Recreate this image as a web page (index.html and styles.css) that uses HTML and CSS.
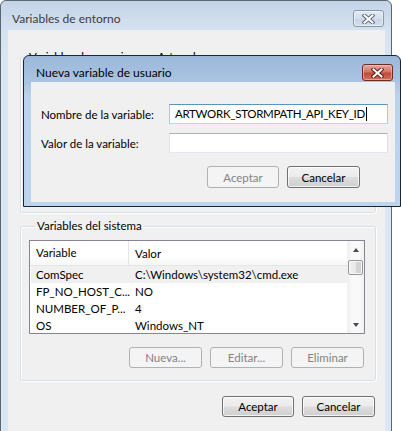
FILE: index.html
```html
<!DOCTYPE html>
<html lang="es">
<head>
<meta charset="utf-8">
<title>Variables de entorno</title>
<link rel="stylesheet" href="styles.css">
</head>
<body>
<div class="window outer">
  <div class="titlebar">
    <span class="title">Variables de entorno</span>
    <span class="close close-inactive">
      <svg width="13" height="10" viewBox="0 0 13 10"><path d="M2.5 1.5 L10.5 8.5 M10.5 1.5 L2.5 8.5" stroke="#5d6b7c" stroke-width="4" stroke-linecap="square" fill="none"/><path d="M2.5 1.5 L10.5 8.5 M10.5 1.5 L2.5 8.5" stroke="#fff" stroke-width="2" stroke-linecap="square" fill="none"/></svg>
    </span>
  </div>
  <div class="client">
    <fieldset class="group group-user">
      <legend>Variables de usuario para Artwork</legend>
      <div class="user-body"></div>
    </fieldset>
    <fieldset class="group group-system">
      <legend>Variables del sistema</legend>
      <div class="listview">
        <div class="list-main">
          <div class="list-header">
            <span class="col1 hcell">Variable</span>
            <span class="col2">Valor</span>
          </div>
          <div class="row selected"><span class="col1">ComSpec</span><span class="col2">C:\Windows\system32\cmd.exe</span></div>
          <div class="row"><span class="col1">FP_NO_HOST_C...</span><span class="col2">NO</span></div>
          <div class="row"><span class="col1">NUMBER_OF_P...</span><span class="col2">4</span></div>
          <div class="row"><span class="col1">OS</span><span class="col2">Windows_NT</span></div>
        </div>
        <div class="scrollbar">
          <span class="sb-btn"><span class="tri tri-up"></span></span>
          <span class="thumb"></span>
          <span class="sb-track"></span>
          <span class="sb-btn"><span class="tri tri-down"></span></span>
        </div>
      </div>
      <div class="btnrow">
        <button class="btn disabled">Nueva...</button>
        <button class="btn disabled">Editar...</button>
        <button class="btn disabled">Eliminar</button>
      </div>
    </fieldset>
    <div class="footer">
      <button class="btn">Aceptar</button>
      <button class="btn">Cancelar</button>
    </div>
  </div>
</div>

<div class="window dialog">
  <div class="titlebar dlg-titlebar">
    <span class="title dlg-title">Nueva variable de usuario</span>
    <span class="close close-active">
      <svg width="13" height="10" viewBox="0 0 13 10"><path d="M2.5 1.5 L10.5 8.5 M10.5 1.5 L2.5 8.5" stroke="#5a2020" stroke-width="4" stroke-linecap="square" fill="none"/><path d="M2.5 1.5 L10.5 8.5 M10.5 1.5 L2.5 8.5" stroke="#fff" stroke-width="2" stroke-linecap="square" fill="none"/></svg>
    </span>
  </div>
  <div class="dlg-client">
    <div class="form-row">
      <span class="form-label">Nombre de la variable:</span>
      <span class="field field-focus">ARTWORK_STORMPATH_API_KEY_ID<span class="caret"></span></span>
    </div>
    <div class="form-row form-row2">
      <span class="form-label">Valor de la variable:</span>
      <span class="field"></span>
    </div>
    <div class="dlg-buttons">
      <button class="btn btn-dlg disabled">Aceptar</button>
      <button class="btn btn-dlg btn-default">Cancelar</button>
    </div>
  </div>
</div>
</body>
</html>
```

FILE: styles.css
```css
html, body {
  margin: 0;
  padding: 0;
  width: 401px;
  height: 431px;
  overflow: hidden;
  background: #ffffff;
}
body {
  position: relative;
  font-family: "Segoe UI", "Lato", "Noto Sans", sans-serif;
  font-size: 11.5px;
  color: #000;
}
.window {
  box-sizing: border-box;
  display: flex;
  flex-direction: column;
}
.outer {
  width: 392px;
  height: 440px;
  border: 1px solid #5d6673;
  border-radius: 6px 6px 0 0;
  background: linear-gradient(#c4d4e7 0px, #d4e1f0 28px, #dae6f3 60px, #dae6f3 100%);
}
.titlebar {
  height: 29px;
  flex: 0 0 auto;
  display: flex;
  align-items: flex-start;
  justify-content: space-between;
  padding: 0 7px 0 11px;
}
.title {
  line-height: 15px;
  margin-top: 10px;
  color: #3c3c3c;
  font-size: 12px;
}
.close {
  box-sizing: border-box;
  width: 31px;
  height: 17px;
  margin-top: 9px;
  border-radius: 3px;
  display: flex;
  align-items: center;
  justify-content: center;
}
.close-inactive {
  border: 1px solid #8797ab;
  background: linear-gradient(#e3eaf3, #d3deea 50%, #c8d5e4 51%, #d2ddea);
  box-shadow: inset 0 0 0 1px rgba(255,255,255,0.5);
}
.close-active {
  border: 1px solid #6e2a26;
  background: linear-gradient(#e6a89e, #d47565 45%, #c24a38 55%, #d2705e);
  box-shadow: inset 0 0 0 1px rgba(255,210,200,0.5);
}
.client {
  flex: 1 1 auto;
  margin: 0 6px 0 7px;
  background: #f0f0f0;
  padding: 20px 0 0 0;
  display: flex;
  flex-direction: column;
  align-items: flex-start;
}
.group {
  box-sizing: border-box;
  margin: 0 0 0 12px;
  width: 356px;
  border: 1px solid #d5dfe5;
  border-radius: 3px;
  box-shadow: 1px 1px 0 #fff, inset 1px 1px 0 #fff;
  padding: 0;
}
.group legend {
  margin-left: 6px;
  padding: 0 2px;
  line-height: 14px;
  height: 14px;
}
.user-body {
  height: 148px;
}
.group-system {
  margin-top: 6px;
  padding: 7px 10px 12px 8px;
}
.listview {
  box-sizing: border-box;
  width: 336px;
  height: 94px;
  border: 1px solid #828790;
  background: #fff;
  display: flex;
  overflow: hidden;
}
.list-main {
  flex: 1 1 auto;
  overflow: hidden;
}
.list-header {
  height: 24px;
  display: flex;
  align-items: center;
  background: linear-gradient(#ffffff, #ffffff 60%, #f6f7f8);
  border-bottom: 1px solid #e5e5e5;
}
.col1 {
  box-sizing: border-box;
  width: 99px;
  padding-left: 6px;
  white-space: nowrap;
}
.col2 {
  padding-left: 6px;
  white-space: nowrap;
}
.hcell {
  height: 24px;
  line-height: 24px;
  border-right: 1px solid #e3e5e7;
}
.row {
  height: 17px;
  line-height: 17px;
  display: flex;
  margin-left: 1px;
}
.row .col1 {
  width: 98px;
  padding-left: 5px;
}
.row.selected {
  background: #f0f0f0;
}
.scrollbar {
  flex: 0 0 17px;
  width: 17px;
  background: linear-gradient(90deg, #f0f0f0, #f9f9f9 30%, #f9f9f9 70%, #f1f1f1);
  display: flex;
  flex-direction: column;
  align-items: center;
}
.sb-btn {
  height: 17px;
  width: 17px;
  display: flex;
  align-items: center;
  justify-content: center;
}
.sb-track {
  flex: 1 1 auto;
}
.thumb {
  box-sizing: border-box;
  margin-top: 2px;
  width: 15px;
  height: 15px;
  border: 1px solid #979797;
  border-radius: 2px;
  background: linear-gradient(90deg, #f2f2f2, #e8e8e8 50%, #d6d6d6 51%, #d0d0d0);
  box-shadow: inset 0 0 0 1px #f7f7f7;
}
.tri {
  width: 0;
  height: 0;
  border-left: 3.5px solid transparent;
  border-right: 3.5px solid transparent;
}
.tri-up {
  border-bottom: 4px solid #4a4a4a;
}
.tri-down {
  border-top: 4px solid #4a4a4a;
}
.btnrow {
  display: flex;
  justify-content: flex-end;
  gap: 8px;
  margin-top: 13px;
  margin-right: 1px;
}
.btn {
  box-sizing: border-box;
  width: 73px;
  height: 21px;
  padding: 0;
  margin: 0;
  border: 1px solid #707070;
  border-radius: 3px;
  background: linear-gradient(#f2f2f2 0%, #ebebeb 48%, #dddddd 52%, #cfcfcf 100%);
  box-shadow: inset 0 0 0 1px rgba(255,255,255,0.75);
  font-family: inherit;
  font-size: 11.5px;
  color: #000;
  line-height: 17px;
}
.btn.disabled {
  border-color: #adb2b5;
  background: #f4f4f4;
  box-shadow: none;
  color: #838383;
}
.footer {
  align-self: stretch;
  display: flex;
  justify-content: flex-end;
  gap: 8px;
  margin-top: 15px;
  padding-right: 10px;
}
.footer .btn {
  width: 72px;
}
.footer .btn + .btn {
  width: 73px;
}

/* dialog */
.dialog {
  position: absolute;
  left: 23px;
  top: 55px;
  width: 378px;
  height: 152px;
  border: 1px solid #1d2530;
  border-radius: 6px 6px 0 0;
  background: linear-gradient(#9cb8d9 0px, #aac4e2 26px, #bcd3ed 40px, #bdd4ee 100%);
}
.dlg-titlebar {
  height: 26px;
  padding: 0 7px 0 12px;
}
.dlg-title {
  margin-top: 9px;
  color: #000;
}
.close-active {
  margin-top: 8px;
}
.dlg-client {
  flex: 1 1 auto;
  margin: 0 5px 4px 7px;
  background: #f0f0f0;
  padding: 22px 7px 0 10px;
  display: flex;
  flex-direction: column;
}
.form-row {
  display: flex;
  align-items: center;
  height: 20px;
}
.form-row2 {
  margin-top: 9px;
}
.form-label {
  width: 128px;
  flex: 0 0 128px;
  white-space: nowrap;
}
.field {
  box-sizing: border-box;
  width: 219px;
  height: 20px;
  border: 1px solid;
  border-color: #abadb3 #dbdfe6 #e3e9ef #e2e3ea;
  background: #fff;
  padding: 0 5px;
  line-height: 18px;
  white-space: nowrap;
  display: flex;
  align-items: center;
  letter-spacing: -0.3px;
}
.field-focus {
  border-color: #5c93bc #a4c9e3 #b7d9ed #a4c9e3;
}
.caret {
  display: inline-block;
  width: 1px;
  height: 14px;
  background: #000;
  margin-left: 1px;
}
.dlg-buttons {
  display: flex;
  justify-content: flex-end;
  gap: 8px;
  margin-top: 13px;
  margin-right: 28px;
}
.btn-dlg {
  width: 72px;
  height: 22px;
}
.btn-dlg + .btn-dlg {
  width: 73px;
}
```
